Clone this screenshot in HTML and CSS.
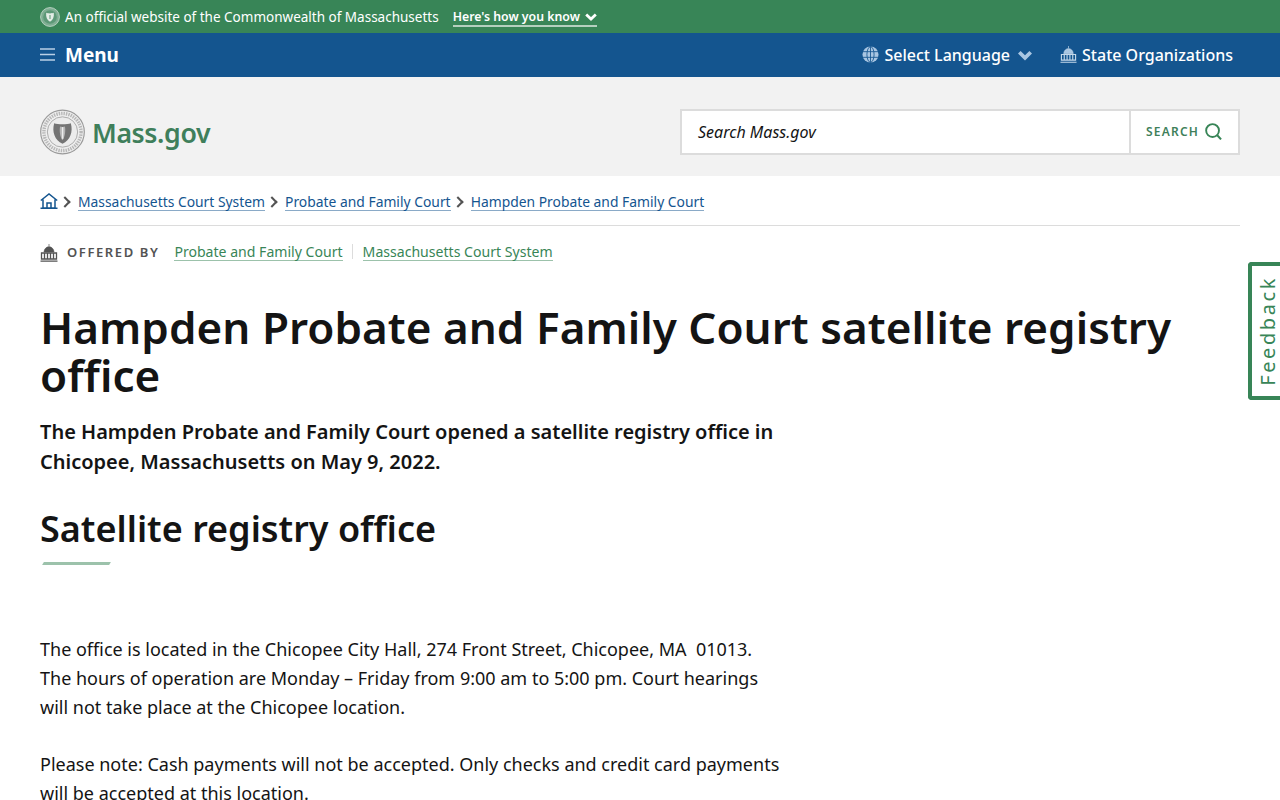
FILE: index.html
```html
<!DOCTYPE html>
<html lang="en">
	<head>
		<title>Hampden Probate and Family Court satellite registry office | Mass.gov</title>
		<meta charset="UTF-8">
		<link rel="stylesheet" href="styles.css">
	</head>
	<body>
		<div class="officialBar">
			<svg class="sealSmall" viewBox="0 0 20 20">
				<circle cx="10" cy="10" r="9.400" fill="#7fae93" stroke="#b5d0bf" stroke-width="1"/>
				<circle cx="10" cy="10" r="6.800" fill="#5c9877"/>
				<path d="M6.200 5.800 C8 6.600 12 6.600 13.800 5.800 C14.300 10 13 13.300 10 14.800 C7 13.300 5.700 10 6.200 5.800Z" fill="#e4ede7"/>
				<path d="M9.300 8h1.400v4h-1.400z" fill="#7fae93"/>
			</svg>
			<span class="officialText">An official website of the Commonwealth of Massachusetts</span>
			<a class="howLink" href="#">Here's how you know
				<svg class="howChevron" viewBox="0 0 12 8"><path d="M1.200 1.500 L6 6 L10.800 1.500" fill="none" stroke="#fff" stroke-width="2.800"/></svg>
			</a>
		</div>

		<nav class="navBar">
			<a class="menuLink" href="#">
				<svg class="menuIcon" viewBox="0 0 15 13"><path d="M0 1h15M0 6.500h15M0 12h15" stroke="#b9d0e6" stroke-width="1.500"/></svg>
				Menu
			</a>
			<div class="navRight">
				<a class="navLink langLink" href="#">
					<svg class="navIcon" viewBox="0 0 18 18">
						<circle cx="9" cy="9" r="8.500" fill="#a9c6e2"/>
						<ellipse cx="9" cy="9" rx="3.800" ry="8.300" fill="none" stroke="#14558f" stroke-width=".9"/>
						<path d="M9 .5v17M1 6h16M1 12h16" stroke="#14558f" stroke-width=".9"/>
					</svg>
					Select Language
					<svg class="langChevron" viewBox="0 0 14 10"><path d="M0 2.600 L2.600 0 L7 4.300 L11.400 0 L14 2.600 L7 9.600Z" fill="#a9c6e2"/></svg>
				</a>
				<a class="navLink" href="#">
					<svg class="navIcon orgIcon" viewBox="0 0 18 18">
						<path d="M9 0v2.500M4 8 C4.300 4.800 6.400 2.800 9 2.800 C11.600 2.800 13.700 4.800 14 8Z" fill="#a9c6e2" stroke="#c4d8ea" stroke-width=".7"/>
						<path d="M1.500 9h15v6h-15zM4.500 9v6M7.500 9v6M10.500 9v6M13.500 9v6M.5 17.200h17" fill="none" stroke="#c4d8ea" stroke-width="1.200"/>
					</svg>
					State Organizations
				</a>
			</div>
		</nav>

		<header class="siteHeader">
			<a class="logoLink" href="#">
				<svg class="seal" viewBox="0 0 46 46">
					<circle cx="23" cy="23" r="22.300" fill="#efefef" stroke="#9a9a9a" stroke-width="1.200"/>
					<circle cx="23" cy="23" r="19" fill="none" stroke="#b8b8b8" stroke-width="3.500" stroke-dasharray="1.500 1"/>
					<circle cx="23" cy="23" r="15.500" fill="#ececec" stroke="#9a9a9a" stroke-width=".8"/>
					<path d="M14.500 14 C18 15.500 28 15.500 31.500 14 C34 23 31 31 23 35 C15 31 12 23 14.500 14Z" fill="#747474"/>
					<path d="M20.500 17.500 C21.500 18 24.500 18 25.500 17.500 C26.500 23 25 29 23 31.500 C21 29 19.500 23 20.500 17.500Z" fill="#b5b5b5"/>
					<path d="M22.400 18h1.400v12h-1.400z" fill="#ececec"/>
				</svg>
				<span class="logoText">Mass.gov</span>
			</a>
			<form class="searchForm">
				<div class="searchInput">Search Mass.gov</div>
				<div class="searchButton">
					SEARCH
					<svg class="searchIcon" viewBox="0 0 18 18"><circle cx="8" cy="8" r="6.800" fill="none" stroke="#388557" stroke-width="2"/><path d="M12.500 12.500 L17 17.300" stroke="#388557" stroke-width="2.200"/></svg>
				</div>
			</form>
		</header>

		<main class="mainBlock">
			<div class="crumbs">
				<svg class="homeIcon" viewBox="0 0 18 16">
					<path d="M.8 7.500 L9 1 L17.200 7.500M3 6.500V15H15V6.500M7 15V10h4v5M.5 15.300h17" fill="none" stroke="#14558f" stroke-width="1.500"/>
				</svg>
				<span class="crumbSep"></span>
				<a class="crumbLink" href="#">Massachusetts Court System</a>
				<span class="crumbSep"></span>
				<a class="crumbLink" href="#">Probate and Family Court</a>
				<span class="crumbSep"></span>
				<a class="crumbLink" href="#">Hampden Probate and Family Court</a>
			</div>

			<div class="offeredBy">
				<svg class="offeredIcon" viewBox="0 0 18 18">
					<path d="M9 0v2.500M4 8 C4.300 4.800 6.400 2.800 9 2.800 C11.600 2.800 13.700 4.800 14 8Z" fill="#535353" stroke="#535353" stroke-width=".7"/>
					<path d="M1.500 9h15v6h-15zM4.500 9v6M7.500 9v6M10.500 9v6M13.500 9v6M.5 17.200h17" fill="none" stroke="#535353" stroke-width="1.300"/>
				</svg>
				<span class="offeredLabel">OFFERED BY</span>
				<a class="offeredLink" href="#">Probate and Family Court</a>
				<a class="offeredLink" href="#">Massachusetts Court System</a>
			</div>

			<h1>Hampden Probate and Family Court satellite registry office</h1>
			<p class="lede">The Hampden Probate and Family Court opened a satellite registry office in Chicopee, Massachusetts on May 9, 2022.</p>

			<h2>Satellite registry office</h2>
			<div class="headingRule"></div>

			<p class="bodyText">The office is located in the Chicopee City Hall, 274 Front Street, Chicopee, MA&nbsp; 01013. The hours of operation are Monday – Friday from 9:00 am to 5:00 pm. Court hearings will not take place at the Chicopee location.</p>
			<p class="bodyText">Please note: Cash payments will not be accepted. Only checks and credit card payments will be accepted at this location.</p>
		</main>

		<a class="feedbackTab" href="#"><span class="feedbackText">Feedback</span></a>
	</body>
</html>
```

FILE: styles.css
```css
html, body {
	height : 800px;
	overflow : hidden;
}
body {
	margin : 0;
	font-family : "Noto Sans", sans-serif;
	color : #141414;
	background-color : white;
}
a {
	text-decoration : none;
}
p, h1, h2 {
	margin : 0;
}

.officialBar {
	display : flex;
	align-items : center;
	height : 33px;
	padding : 0 40px;
	background-color : #388557;
	color : white;
	font-size : 13.5px;
}
.sealSmall {
	width : 20px;
	height : 20px;
	margin-right : 5px;
}
.officialText {
	margin-right : 14px;
}
.howLink {
	display : flex;
	align-items : center;
	height : 17px;
	padding-top : 2px;
	color : white;
	font-size : 12.3px;
	font-weight : 600;
	border-bottom : 2px solid #b5d0bf;
}
.howChevron {
	width : 12px;
	height : 8px;
	margin-left : 5px;
}

.navBar {
	display : flex;
	align-items : center;
	justify-content : space-between;
	height : 44px;
	padding : 0 47px 0 40px;
	background-color : #14558f;
}
.menuLink {
	display : flex;
	align-items : center;
	color : white;
	font-size : 19px;
	font-weight : 700;
}
.menuIcon {
	width : 15px;
	height : 13px;
	margin-right : 10px;
	position : relative;
	top : -1px;
}
.navRight {
	display : flex;
	align-items : center;
	gap : 28px;
}
.navLink {
	display : flex;
	align-items : center;
	color : white;
	font-size : 16px;
	font-weight : 500;
}
.navIcon {
	width : 17px;
	height : 17px;
	margin-right : 5px;
	position : relative;
	top : -1px;
}
.langChevron {
	width : 14px;
	height : 10px;
	margin-left : 8px;
	position : relative;
	top : 1px;
}

.siteHeader {
	display : flex;
	align-items : center;
	justify-content : space-between;
	height : 99px;
	box-sizing : border-box;
	padding : 11px 40px 0;
	background-color : #f2f2f2;
}
.logoLink {
	display : flex;
	align-items : center;
}
.seal {
	width : 45px;
	height : 46px;
	margin-right : 7px;
}
.logoText {
	color : #3f7f5b;
	font-size : 26.7px;
	font-weight : 600;
	letter-spacing : -0.4px;
}
.searchForm {
	display : flex;
	width : 560px;
	height : 46px;
	box-sizing : border-box;
	border : 2px solid #dcdcdc;
	background-color : white;
}
.searchInput {
	flex : 1;
	padding-left : 16px;
	line-height : 42px;
	font-size : 16px;
	font-style : italic;
}
.searchButton {
	display : flex;
	align-items : center;
	width : 109px;
	box-sizing : border-box;
	padding-left : 15px;
	padding-bottom : 1px;
	border-left : 2px solid #dcdcdc;
	color : #3f7f5b;
	font-size : 12px;
	font-weight : 600;
	letter-spacing : 1.2px;
}
.searchIcon {
	width : 17px;
	height : 17px;
	margin-left : 6px;
}

.mainBlock {
	padding : 0 40px;
}
.crumbs {
	display : flex;
	align-items : center;
	width : 1200px;
	height : 50px;
	box-sizing : border-box;
	padding-top : 3px;
	border-bottom : 1px solid #dcdcdc;
	font-size : 13.87px;
}
.homeIcon {
	width : 18px;
	height : 16px;
	position : relative;
	top : -1px;
}
.crumbSep {
	width : 6px;
	height : 6px;
	margin : 0 9px 0 3px;
	border-top : 2px solid #535353;
	border-right : 2px solid #535353;
	transform : rotate(45deg);
}
.crumbLink {
	color : #14558f;
	line-height : 16px;
	border-bottom : 1px solid #8aaac7;
}
.offeredBy {
	display : flex;
	align-items : center;
	height : 53px;
	font-size : 14.08px;
}
.offeredIcon {
	width : 18px;
	height : 18px;
	margin-right : 9px;
}
.offeredLabel {
	margin-right : 15px;
	padding-bottom : 1px;
	color : #535353;
	font-size : 13px;
	font-weight : 600;
	letter-spacing : 1.6px;
}
.offeredLink {
	color : #388557;
	line-height : 16px;
	border-bottom : 1px solid #9cc2ab;
}
.offeredLink + .offeredLink {
	position : relative;
	margin-left : 20px;
}
.offeredLink + .offeredLink::before {
	content : "";
	position : absolute;
	left : -11px;
	top : 0;
	height : 15px;
	border-left : 1px solid #dcdcdc;
}

h1 {
	margin-top : 24px;
	font-size : 44px;
	font-weight : 600;
	line-height : 48px;
	letter-spacing : 0.04px;
}
.lede {
	width : 760px;
	margin-top : 18px;
	font-size : 20px;
	font-weight : 600;
	line-height : 30px;
}
h2 {
	margin-top : 29px;
	font-size : 36px;
	font-weight : 600;
	line-height : 46px;
}
.headingRule {
	width : 67px;
	height : 3px;
	margin : 10px 0 0 3px;
	background-color : #9cc2ab;
	transform : skewX(-30deg);
}
.bodyText {
	width : 745px;
	margin-bottom : 28px;
	font-size : 18px;
	line-height : 29px;
}
.headingRule + .bodyText {
	margin-top : 70px;
}

.feedbackTab {
	position : absolute;
	top : 262px;
	right : 0;
	display : flex;
	align-items : center;
	justify-content : center;
	width : 32px;
	height : 138px;
	box-sizing : border-box;
	padding-left : 3px;
	border : 4px solid #388557;
	border-right : none;
	border-radius : 4px 0 0 4px;
	background-color : white;
	color : #388557;
}
.feedbackText {
	writing-mode : vertical-rl;
	transform : rotate(180deg);
	font-size : 20px;
	letter-spacing : 2.6px;
}
```
